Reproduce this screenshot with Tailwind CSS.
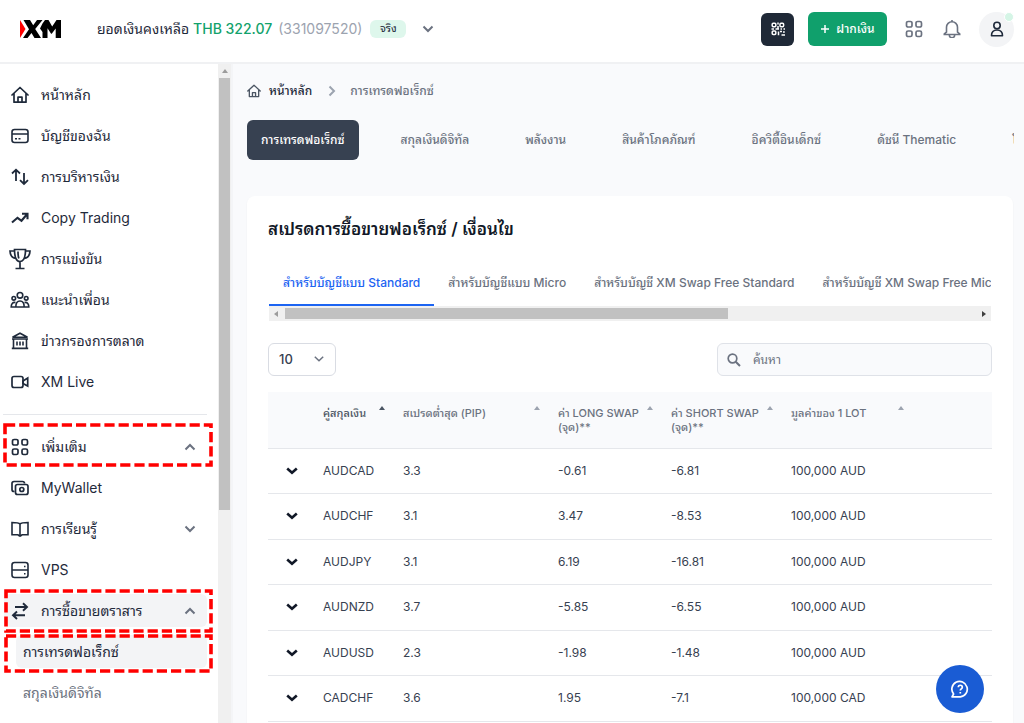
<!DOCTYPE html>
<html lang="th">
<head>
<meta charset="utf-8">
<title>XM</title>
<script src="https://cdn.jsdelivr.net/npm/@tailwindcss/browser@4"></script>
</head>
<body class="flex h-screen flex-col overflow-hidden bg-[#f9fafc] font-['Inter','Noto_Sans_Thai_Looped','Leelawadee_UI','Loma','Waree','Noto_Sans_Thai','Noto_Sans',sans-serif] text-[#1f2a3b]">
<svg class="hidden" aria-hidden="true">
  <symbol id="down" viewBox="0 0 12 8"><path d="M1.5 1.5 6 6l4.500-4.500" fill="none" stroke="currentColor" stroke-width="2"/></symbol>
  <symbol id="row" viewBox="0 0 12 8"><path d="M1.200 1.500 6 5.700l4.800-4.200" fill="none" stroke="currentColor" stroke-width="2.600"/></symbol>
  <symbol id="sort" viewBox="0 0 6 4"><path d="M0 4 3 0l3 4z" fill="currentColor"/></symbol>
  <symbol id="home" viewBox="0 0 18 18"><path d="M1 9 9 1.500 17 9M3 7.500V16.200h12V7.500M7 16v-4.800h4V16" fill="none" stroke="currentColor" stroke-width="1.700" stroke-linejoin="round" stroke-linecap="round"/></symbol>
  <symbol id="grid" viewBox="0 0 18 18"><g fill="none" stroke="currentColor" stroke-width="1.700"><rect x="1.500" y="1.500" width="5.500" height="5.500" rx="1.600"/><rect x="11" y="1.500" width="5.500" height="5.500" rx="1.600"/><rect x="1.500" y="11" width="5.500" height="5.500" rx="1.600"/><rect x="11" y="11" width="5.500" height="5.500" rx="1.600"/></g></symbol>
</svg>

<header class="flex h-16 shrink-0 items-center border-b-2 border-[#f0f1f3] bg-white pr-2.5 pb-1 pl-5">
  <a href="#" aria-label="XM" class="mr-9 shrink-0">
    <svg class="h-[18px] w-[41px]" viewBox="0 0 41 18"><path d="M0 0 5.500 9 0 18z" fill="#f00"/><path d="M3.500 0h6.500l3.200 5.200L17 0h5.500l-7.300 9L21 18h-6.500l-3-5L7.500 18H3l6-8.800zM22.500 3.500 25 0h3.500l3.700 6.500L36.500 0H41v18h-5.300V8.500l-4 5.300h-.6l-3.600-5.500V18h-5v-6l-2.500-3.500z" fill="#000"/></svg>
  </a>
  <button class="flex items-center text-sm">
    <span>ยอดเงินคงเหลือ</span>
    <span class="ml-1 font-medium text-[#12a26c]">THB 322.07</span>
    <span class="ml-1.5 text-[#9ca3af]">(331097520)</span>
    <span class="ml-2 flex h-[18px] w-9 items-center justify-center rounded-md bg-[#def7ec] text-[11px]">จริง</span>
    <svg class="ml-4 h-2 w-3 text-[#6b7280]"><use href="#down"/></svg>
  </button>
  <div class="ml-auto flex items-center">
    <button aria-label="QR" class="flex size-[33px] items-center justify-center rounded-md bg-[#1f2937] text-white">
      <svg class="size-3.5" viewBox="0 0 14 14" fill="none" stroke="currentColor" stroke-width="1.500"><rect x="1.200" y="1.200" width="3.600" height="3.600" rx="1"/><rect x="9" y="1.200" width="3.600" height="3.600" rx="1"/><rect x="1.200" y="9" width="3.600" height="3.600" rx="1"/><path d="M7 .5v2M7 4v3M.5 7H3M4.500 7H8M9.500 7h1.500M12.500 7H14M7.500 9.500v3.800M9 9.500h2M12 10h1.800M10.500 13h3.500"/></svg>
    </button>
    <button class="ml-3.5 flex h-[34px] w-[79px] items-center justify-center gap-1.5 rounded-md bg-[#10a06c] text-xs font-medium text-white">
      <svg class="size-2.5" viewBox="0 0 10 10"><path d="M5 1v8M1 5h8" stroke="currentColor" stroke-width="1.500"/></svg>ฝากเงิน
    </button>
    <button aria-label="Apps" class="ml-[18px] text-[#6b7280]"><svg class="size-[18px]"><use href="#grid"/></svg></button>
    <button aria-label="Notifications" class="ml-5 text-[#6b7280]"><svg class="size-[18px]" viewBox="0 0 18 18" fill="none" stroke="currentColor" stroke-width="1.600"><path d="M3.500 12V7.300a5.500 5.500 0 0 1 11 0V12l2.200 1.800v.7H1.300v-.7zM9 2V0M6.300 15a2.700 2.700 0 0 0 5.400 0"/></svg></button>
    <button aria-label="Profile" class="relative ml-[18px] flex size-[35px] items-center justify-center rounded-full bg-[#f3f4f6]">
      <svg class="size-4" viewBox="0 0 16 16" fill="none" stroke="currentColor" stroke-width="1.600"><circle cx="8" cy="4.500" r="3.200"/><path d="M2.500 14.700c0-3.600 2.200-5.700 5.500-5.700s5.500 2.100 5.500 5.700z" stroke-linejoin="round"/></svg>
      <span class="absolute top-0 right-0 size-2.5 rounded-full border border-white bg-[#d5f5e6]"></span>
    </button>
  </div>
</header>

<div class="flex min-h-0 flex-1">
  <nav class="flex w-[218px] shrink-0 flex-col overflow-hidden bg-white pt-[10px] text-sm">
    <ul>
      <li><a href="#" class="flex h-[41px] items-center gap-3 pl-[11px]"><svg class="size-[18px]"><use href="#home"/></svg>หน้าหลัก</a></li>
      <li><a href="#" class="flex h-[41px] items-center gap-3 pl-[11px]"><svg class="size-[18px]" viewBox="0 0 18 18" fill="none" stroke="currentColor" stroke-width="1.600"><rect x="1" y="2.500" width="16" height="13" rx="2.500"/><path d="M1 7h16M4 11.800h2M7.500 11.800h2"/></svg>บัญชีของฉัน</a></li>
      <li><a href="#" class="flex h-[41px] items-center gap-3 pl-[11px]"><svg class="size-[18px]" viewBox="0 0 18 18" fill="none" stroke="currentColor" stroke-width="1.800"><path d="M5 13V2.200M1 5.500 5 1.700l4 3.800M13 5v10.500M9 12.200l4 3.800 4-3.800"/></svg>การบริหารเงิน</a></li>
      <li><a href="#" class="flex h-[41px] items-center gap-3 pl-[11px]"><svg class="size-[18px]" viewBox="0 0 18 18" fill="none" stroke="currentColor" stroke-width="2.100"><path d="m1 13.500 5.500-4.700 4 3 5.500-6.500M11 4.800h5.500v5.500"/></svg>Copy Trading</a></li>
      <li><a href="#" class="flex h-[41px] items-center gap-2.5 pl-[9px]"><svg class="size-[22px]" viewBox="0 0 22 22" fill="none" stroke="currentColor" stroke-width="1.700"><path d="M5.500 1.500h11c0 7-1.500 12-5.500 12s-5.500-5-5.500-12zM5.500 3H1c.2 4.500 2.500 7 6 7.500M16.500 3H21c-.2 4.500-2.500 7-6 7.500M11 13.500V20M6.500 20.500h9M9 3.500c0 3 .2 5 .8 7"/></svg>การแข่งขัน</a></li>
      <li><a href="#" class="flex h-[41px] items-center gap-3 pl-[11px]"><svg class="size-[18px] overflow-visible" viewBox="0 0 18 18" fill="none" stroke="currentColor" stroke-width="1.600"><circle cx="9" cy="4.300" r="2.800"/><circle cx="2.800" cy="7.300" r="1.800"/><circle cx="15.200" cy="7.300" r="1.800"/><path d="M4.800 16c0-4 1.200-6 4.200-6s4.200 2 4.200 6zM4.500 11.500C1.500 11 .2 13 .2 16h4.600M13.500 11.500c3-.5 4.300 1.500 4.300 4.500h-4.600"/></svg>แนะนำเพื่อน</a></li>
      <li><a href="#" class="flex h-[41px] items-center gap-3 pl-[11px]"><svg class="size-[18px]" viewBox="0 0 18 18" fill="none" stroke="currentColor" stroke-width="1.600"><path d="M1.500 5.200 9 1.200l7.500 4zM1 7h16M2.500 7v9M15.500 7v9M.8 16.400h16.400M6 9.500v4M9 9.500v4M12 9.500v4"/></svg>ข่าวกรองการตลาด</a></li>
      <li><a href="#" class="flex h-[41px] items-center gap-3 pl-[11px]"><svg class="size-[18px]" viewBox="0 0 18 18" fill="none" stroke="currentColor" stroke-width="1.700"><rect x="1" y="3.500" width="11" height="11" rx="2"/><path d="m12 8 4.700-3v8L12 10.500z"/></svg>XM Live</a></li>
    </ul>
    <hr class="mt-3 mr-[11px] mb-[11px] ml-[3px] border-[#e5e7eb]">
    <ul class="pr-[11px]">
      <li class="relative"><button class="flex h-[41px] w-full items-center gap-3 pr-[11px] pl-[11px]"><svg class="size-[18px]"><use href="#grid"/></svg>เพิ่มเติม<svg class="ml-auto h-2 w-3 rotate-180 text-[#6b7280]"><use href="#down"/></svg></button>
        <svg class="pointer-events-none absolute top-0 left-1 h-[41px] w-[208px] overflow-visible"><rect x="1" y="-1" width="206" height="40" fill="none" stroke="#f00" stroke-width="3.600" stroke-dasharray="10.200 4"/></svg></li>
      <li><a href="#" class="flex h-[41px] items-center gap-3 pl-[11px]"><svg class="size-[18px]" viewBox="0 0 18 18" fill="none" stroke="currentColor" stroke-width="1.700"><path d="M3.500 12.500H3A2 2 0 0 1 1 10.500V4.500a2 2 0 0 1 2-2h8.500a2 2 0 0 1 2 2"/><rect x="4.500" y="5.500" width="12.500" height="10" rx="2"/><circle cx="10.800" cy="10.500" r="2"/></svg>MyWallet</a></li>
      <li><button class="flex h-[41px] w-full items-center gap-3 pr-[11px] pl-[11px]"><svg class="size-[18px]" viewBox="0 0 18 18" fill="none" stroke="currentColor" stroke-width="1.600"><path d="M9 4v12.500M9 4C8 2.800 6.500 2.500 1 2.500v12.300h6L9 16.500M9 4c1-1.200 2.500-1.500 8-1.500v12.300h-6L9 16.500"/></svg>การเรียนรู้<svg class="ml-auto h-2 w-3 text-[#6b7280]"><use href="#down"/></svg></button></li>
      <li><a href="#" class="flex h-[41px] items-center gap-3 pl-[11px]"><svg class="size-[18px]" viewBox="0 0 18 18" fill="none" stroke="currentColor" stroke-width="1.600"><rect x="1" y="1.500" width="16" height="15" rx="2.500"/><path d="M1 9h16M13 5.500h1.500M13 12.800h1.500"/></svg>VPS</a></li>
      <li class="relative flex h-[41px] items-center"><button class="ml-1 flex h-[33px] w-full items-center gap-3 rounded-md bg-[#f3f4f6] pr-[11px] pl-[7px]"><svg class="size-[18px]" viewBox="0 0 18 18" fill="none" stroke="currentColor" stroke-width="1.900"><path d="M4 5h12M12 1.200 16 5l-4 3.800M14 13.200H2M6 9.500l-4 3.700L6 17"/></svg>การซื้อขายตราสาร<svg class="ml-auto h-2 w-3 rotate-180 text-[#6b7280]"><use href="#down"/></svg></button>
        <svg class="pointer-events-none absolute top-0 left-1 h-[41px] w-[208px] overflow-visible"><rect x="2" y="1" width="205" height="40" fill="none" stroke="#f00" stroke-width="3.600" stroke-dasharray="10.200 4"/></svg></li>
      <li class="relative flex h-[41px] items-center"><a href="#" class="ml-4 flex h-[33px] w-full items-center rounded-md bg-[#f3f4f6] pl-[7px]">การเทรดฟอเร็กซ์</a>
        <svg class="pointer-events-none absolute top-0 left-1 h-[41px] w-[208px] overflow-visible"><rect x="2" y="5" width="205" height="35" fill="none" stroke="#f00" stroke-width="3.600" stroke-dasharray="10.200 4"/></svg></li>
      <li><a href="#" class="ml-4 flex h-[41px] items-center pl-[7px] text-[#6b7280]">สกุลเงินดิจิทัล</a></li>
    </ul>
  </nav>
  <div class="flex w-[15px] shrink-0 flex-col items-center border-r-2 border-[#f4f5f7] bg-[#f0f0f0]" aria-hidden="true">
    <svg class="my-[5px] h-1 w-1.5 shrink-0 text-[#9c9c9c]"><use href="#sort"/></svg>
    <div class="h-[432px] w-[11px] shrink-0 bg-[#c1c1c1]"></div>
  </div>

  <main class="min-w-0 flex-1 px-3.5 pt-[18px]">
    <nav class="flex h-[18px] items-center text-xs" aria-label="Breadcrumb">
      <a href="#" class="flex items-center gap-2 font-medium"><svg class="size-3.5 text-[#4b5563]"><use href="#home"/></svg>หน้าหลัก</a>
      <svg class="mr-3 ml-3.5 h-2 w-3 -rotate-90 text-[#9ca3af]"><use href="#down"/></svg>
      <span class="font-medium text-[#6b7280]">การเทรดฟอเร็กซ์</span>
    </nav>
    <div class="mt-5 -mr-1 flex gap-7 overflow-hidden pr-1 text-xs font-medium whitespace-nowrap text-[#6b7280] *:shrink-0">
      <button class="h-10 rounded-md bg-[#374151] px-3.5 text-white">การเทรดฟอเร็กซ์</button>
      <button class="px-3.5">สกุลเงินดิจิทัล</button>
      <button class="px-3.5">พลังงาน</button>
      <button class="px-3.5">สินค้าโภคภัณฑ์</button>
      <button class="px-3.5">อิควิตี้อินเด็กซ์</button>
      <button class="px-3.5">ดัชนี Thematic</button>
      <button class="px-3.5">โลหะมีค่า</button>
    </div>

    <section class="mt-9 mr-[-3px] rounded-lg bg-white px-[21px] pt-5 pb-5 shadow-xs">
      <h1 class="text-[17px] leading-[26px] font-semibold text-[#111827]">สเปรดการซื้อขายฟอเร็กซ์ / เงื่อนไข</h1>
      <div class="mx-px mt-5 flex overflow-hidden text-xs font-medium whitespace-nowrap text-[#6b7280] *:h-11 *:shrink-0 *:border-b-2 *:px-3.5" role="tablist">
        <button role="tab" aria-selected="true" class="border-[#1c64f2] text-[#1c64f2]">สำหรับบัญชีแบบ Standard</button>
        <button role="tab" class="border-transparent">สำหรับบัญชีแบบ Micro</button>
        <button role="tab" class="border-transparent">สำหรับบัญชี XM Swap Free Standard</button>
        <button role="tab" class="border-transparent">สำหรับบัญชี XM Swap Free Micro</button>
      </div>
      <div class="mx-px flex h-[15px] items-center bg-[#f0f0f0] px-1" aria-hidden="true">
        <svg class="mr-1.5 h-1 w-1.5 -rotate-90 text-[#9c9c9c]"><use href="#sort"/></svg>
        <div class="h-[11px] w-[62%] bg-[#c1c1c1]"></div>
        <svg class="ml-auto h-1 w-1.5 rotate-90 text-[#404040]"><use href="#sort"/></svg>
      </div>
      <div class="mt-[22px] flex items-center justify-between">
        <label class="relative">
          <select aria-label="Rows" class="h-[33px] w-[68px] appearance-none rounded-md border border-[#d9dce3] bg-white pl-2.5 text-[13px] font-medium text-[#374151]"><option>10</option></select>
          <svg class="pointer-events-none absolute top-3 right-[11px] h-2 w-3 text-[#6b7280]" viewBox="0 0 12 8"><path d="M1.800 1.800 6 5.800l4.200-4" fill="none" stroke="currentColor" stroke-width="1.500"/></svg>
        </label>
        <label class="relative">
          <svg class="absolute top-2.5 left-2.5 size-3.5 text-[#6b7280]" viewBox="0 0 14 14" fill="none" stroke="currentColor"><circle cx="5.500" cy="5.500" r="4.300" stroke-width="1.700"/><path d="m8.700 8.700 4.300 4.300" stroke-width="2"/></svg>
          <input type="search" aria-label="ค้นหา" placeholder="ค้นหา" class="h-[33px] w-[275px] rounded-md border border-[#dfe2e8] bg-[#f9fafc] pl-[35px] text-xs placeholder:text-[#6b7280]">
        </label>
      </div>
      <table class="mt-4 w-full table-fixed text-left text-xs text-[#374151]">
        <colgroup><col class="w-[55px]"><col class="w-20"><col class="w-[155px]"><col class="w-[113px]"><col class="w-[120px]"><col class="w-[131px]"><col></colgroup>
        <thead class="border-b border-[#e5e7eb] bg-[#f9fafc] text-[11px] leading-3.5 text-[#6b7280]">
          <tr class="h-14 align-top *:pt-3.5 *:font-medium">
            <th></th>
            <th><button class="flex w-full items-start justify-between pr-[18px] text-left text-[#4b5563]">คู่สกุลเงิน<svg class="h-1 w-1.5 shrink-0"><use href="#sort"/></svg></button></th>
            <th><button class="flex w-full items-start justify-between pr-[18px] text-left">สเปรดต่ำสุด (PIP)<svg class="h-1 w-1.5 shrink-0 text-[#9ca3af]"><use href="#sort"/></svg></button></th>
            <th><button class="flex w-full items-start justify-between pr-[18px] text-left"><span>ค่า LONG SWAP<br>(จุด)**</span><svg class="h-1 w-1.5 shrink-0 text-[#9ca3af]"><use href="#sort"/></svg></button></th>
            <th><button class="flex w-full items-start justify-between pr-[18px] text-left"><span>ค่า SHORT SWAP<br>(จุด)**</span><svg class="h-1 w-1.5 shrink-0 text-[#9ca3af]"><use href="#sort"/></svg></button></th>
            <th><button class="flex w-full items-start justify-between pr-[18px] text-left">มูลค่าของ 1 LOT<svg class="h-1 w-1.5 shrink-0 text-[#9ca3af]"><use href="#sort"/></svg></button></th>
            <th></th>
          </tr>
        </thead>
        <tbody class="*:border-b *:border-[#e5e7eb] *:odd:h-[45px] *:even:h-[46px]">
          <tr><td class="pl-[18px]"><button aria-label="Details" class="flex text-[#111827]"><svg class="h-2 w-3"><use href="#row"/></svg></button></td><td>AUDCAD</td><td>3.3</td><td>-0.61</td><td>-6.81</td><td>100,000 AUD</td><td></td></tr>
          <tr><td class="pl-[18px]"><button aria-label="Details" class="flex text-[#111827]"><svg class="h-2 w-3"><use href="#row"/></svg></button></td><td>AUDCHF</td><td>3.1</td><td>3.47</td><td>-8.53</td><td>100,000 AUD</td><td></td></tr>
          <tr><td class="pl-[18px]"><button aria-label="Details" class="flex text-[#111827]"><svg class="h-2 w-3"><use href="#row"/></svg></button></td><td>AUDJPY</td><td>3.1</td><td>6.19</td><td>-16.81</td><td>100,000 AUD</td><td></td></tr>
          <tr><td class="pl-[18px]"><button aria-label="Details" class="flex text-[#111827]"><svg class="h-2 w-3"><use href="#row"/></svg></button></td><td>AUDNZD</td><td>3.7</td><td>-5.85</td><td>-6.55</td><td>100,000 AUD</td><td></td></tr>
          <tr><td class="pl-[18px]"><button aria-label="Details" class="flex text-[#111827]"><svg class="h-2 w-3"><use href="#row"/></svg></button></td><td>AUDUSD</td><td>2.3</td><td>-1.98</td><td>-1.48</td><td>100,000 AUD</td><td></td></tr>
          <tr><td class="pl-[18px]"><button aria-label="Details" class="flex text-[#111827]"><svg class="h-2 w-3"><use href="#row"/></svg></button></td><td>CADCHF</td><td>3.6</td><td>1.95</td><td>-7.1</td><td>100,000 CAD</td><td></td></tr>
        </tbody>
      </table>
    </section>
  </main>
</div>

<button aria-label="Help" class="fixed right-10 bottom-2.5 flex size-12 items-center justify-center rounded-full bg-[#1a5cd4] text-white">
  <svg class="size-[18px]" viewBox="0 0 18 18" fill="none" stroke="currentColor" stroke-width="1.700"><path d="M1 16.800 2.600 14A7.700 7.700 0 1 1 9.300 16.800z" stroke-linejoin="round"/><path d="M7.300 7.200c0-2.600 4-2.600 4 0 0 1.600-2 1.600-2 3.200M9.300 12v1.500"/></svg>
</button>
</body>
</html>
